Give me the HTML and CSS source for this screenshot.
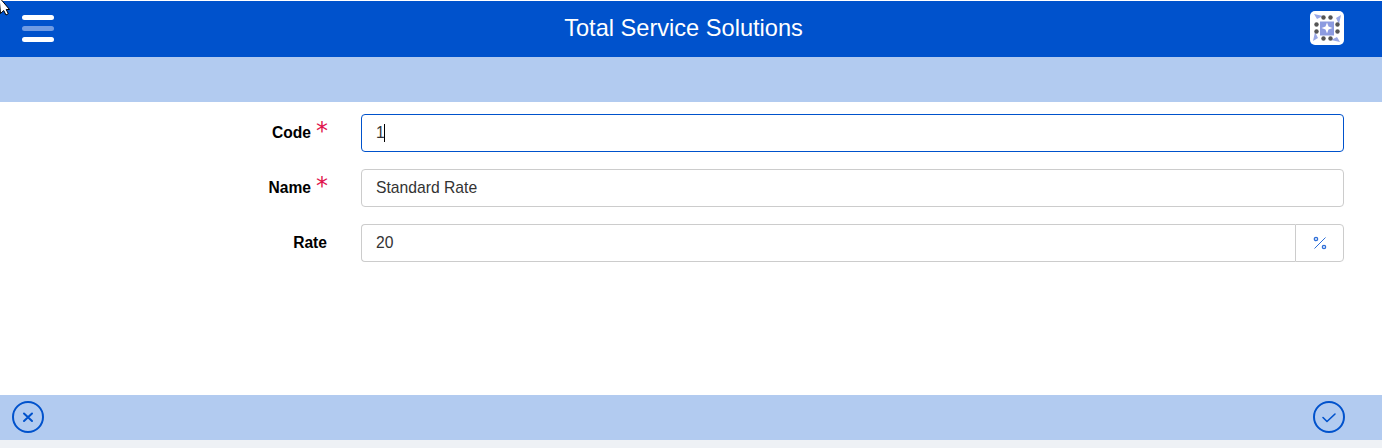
FILE: index.html
```html
<!DOCTYPE html>
<html lang="en">
<head>
<meta charset="utf-8">
<title>Total Service Solutions</title>
<link rel="stylesheet" href="styles.css">
</head>
<body>
<div class="app">
  <svg class="pointer" width="12" height="16" viewBox="0 0 12 16"><path d="M-1-3L9.500 9.500H6.200L8.300 13.700 6 15 3.700 10.500 0.500 13.500Z" fill="#fff" stroke="#000" stroke-width="1"/></svg>
  <header class="topbar">
    <div class="burger"><span class="bar"></span><span class="bar dim"></span><span class="bar"></span></div>
    <h1 class="title">Total Service Solutions</h1>
    <div class="logo">
      <svg width="34" height="34" viewBox="0 0 34 34">
        <rect width="34" height="34" rx="5" fill="#fff"/>
        <path d="M4 3l9 2-6 3zM31 4l-2 9-3-6zM30 31l-9-2 6-3zM3 30l2-9 3 6z" fill="#9aa8e6"/>
        <rect x="10" y="10.500" width="14" height="14" fill="#8c9be0"/>
        <path d="M17 11.500l1.500 4 4 1.500-4 1.500-1.500 4-1.500-4-4-1.500 4-1.500z" fill="#fff"/>
        <g fill="#555">
          <circle cx="13.500" cy="6.500" r="2.200"/><circle cx="20.500" cy="6.500" r="2.200"/>
          <circle cx="13.500" cy="27.500" r="2.200"/><circle cx="20.500" cy="27.500" r="2.200"/>
          <circle cx="6.500" cy="13.500" r="2.200"/><circle cx="6.500" cy="20.500" r="2.200"/>
          <circle cx="27.500" cy="13.500" r="2.200"/><circle cx="27.500" cy="20.500" r="2.200"/>
        </g>
      </svg>
    </div>
  </header>
  <div class="band"></div>
  <main class="form">
    <div class="row">
      <div class="label"><span>Code</span><span class="star">*</span></div>
      <div class="field focus"><span>1</span><span class="caret"></span></div>
    </div>
    <div class="row">
      <div class="label"><span>Name</span><span class="star">*</span></div>
      <div class="field"><span>Standard Rate</span></div>
    </div>
    <div class="row">
      <div class="label"><span>Rate</span></div>
      <div class="group">
        <div class="field joined"><span>20</span></div>
        <div class="addon">
          <svg width="14" height="14" viewBox="0 0 14 14" fill="none" stroke="#2f6fd8">
            <path d="M12.500 1.500L1.500 12.500" stroke-width="1"/>
            <circle cx="3" cy="3" r="1.600" stroke-width="1.400"/>
            <circle cx="11" cy="11" r="1.600" stroke-width="1.400"/>
          </svg>
        </div>
      </div>
    </div>
  </main>
  <footer class="actions">
    <svg class="action" width="34" height="34" viewBox="0 0 34 34" fill="none" stroke="#0052cc">
      <circle cx="17" cy="17" r="15" stroke-width="2"/>
      <path d="M13 13.500l8 7.500M21 13.500l-8 7.500" stroke-width="2" stroke-linecap="round"/>
    </svg>
    <svg class="action" width="34" height="34" viewBox="0 0 34 34" fill="none" stroke="#0052cc">
      <circle cx="17" cy="17" r="15" stroke-width="2"/>
      <path d="M11 17.500l4 4 8-7.500" stroke-width="1.600" stroke-linecap="round" stroke-linejoin="round"/>
    </svg>
  </footer>
  <div class="tail"></div>
</div>
</body>
</html>
```

FILE: styles.css
```css
* { box-sizing: border-box; }
html, body { margin: 0; padding: 0; }
body { font-family: "Liberation Sans", Arial, sans-serif; color: #212529; background: #fff; overflow: hidden; }
.app { position: relative; display: flex; flex-direction: column; width: 1382px; height: 448px; padding-top: 1px; }
.pointer { position: absolute; left: 0; top: 0; z-index: 2; }
.topbar { display: flex; align-items: center; justify-content: space-between; height: 56px; padding: 0 38px 2px 22px; background: #0052cc; position: relative; }
.burger { display: flex; flex-direction: column; gap: 6px; width: 32px; }
.bar { display: block; height: 5px; border-radius: 3px; background: #fff; }
.bar.dim { background: #6f9be3; }
.title { margin: 0; font-size: 23.6px; font-weight: 400; line-height: 28px; color: #fff; position: absolute; left: 0; right: 0; text-align: center; top: 13px; padding-right: 15px; }
.logo { width: 34px; height: 34px; }
.logo svg { display: block; }
.band { height: 45px; background: #b2cbf0; }
.form { flex: 1; display: flex; flex-direction: column; gap: 17px; padding: 12px 38px 0 0; }
.row { display: flex; align-items: center; height: 38px; }
.label { width: 361px; padding-right: 34px; display: flex; justify-content: flex-end; align-items: center; font-size: 15.6px; font-weight: 700; color: #000; margin-top: -1px; }
.star { color: #e0144c; font-family: "DejaVu Sans", sans-serif; font-size: 24px; font-weight: 400; line-height: 24px; height: 24px; width: 17px; margin-top: -4px; margin-right: -1px; text-align: right; }
.field { flex: 1; height: 38px; display: flex; align-items: center; padding: 0 14px; border: 1px solid #ccc; border-radius: 4px; font-size: 15.7px; color: #333; }
.field > span:first-child { margin-top: -1px; }
.field.focus { border-color: #0052cc; }
.caret { width: 1px; height: 18px; background: #000; margin-left: -1px; }
.group { flex: 1; display: flex; height: 38px; }
.field.joined { border-radius: 4px 0 0 4px; border-right: 0; }
.addon { width: 49px; display: flex; align-items: center; justify-content: center; border: 1px solid #ccc; border-radius: 0 4px 4px 0; }
.addon svg { display: block; }
.actions { display: flex; align-items: center; justify-content: space-between; height: 45px; padding: 0 36px 2px 11px; background: #b2cbf0; }
.action { display: block; }
.tail { height: 8px; background: #eef1f5; }
```
